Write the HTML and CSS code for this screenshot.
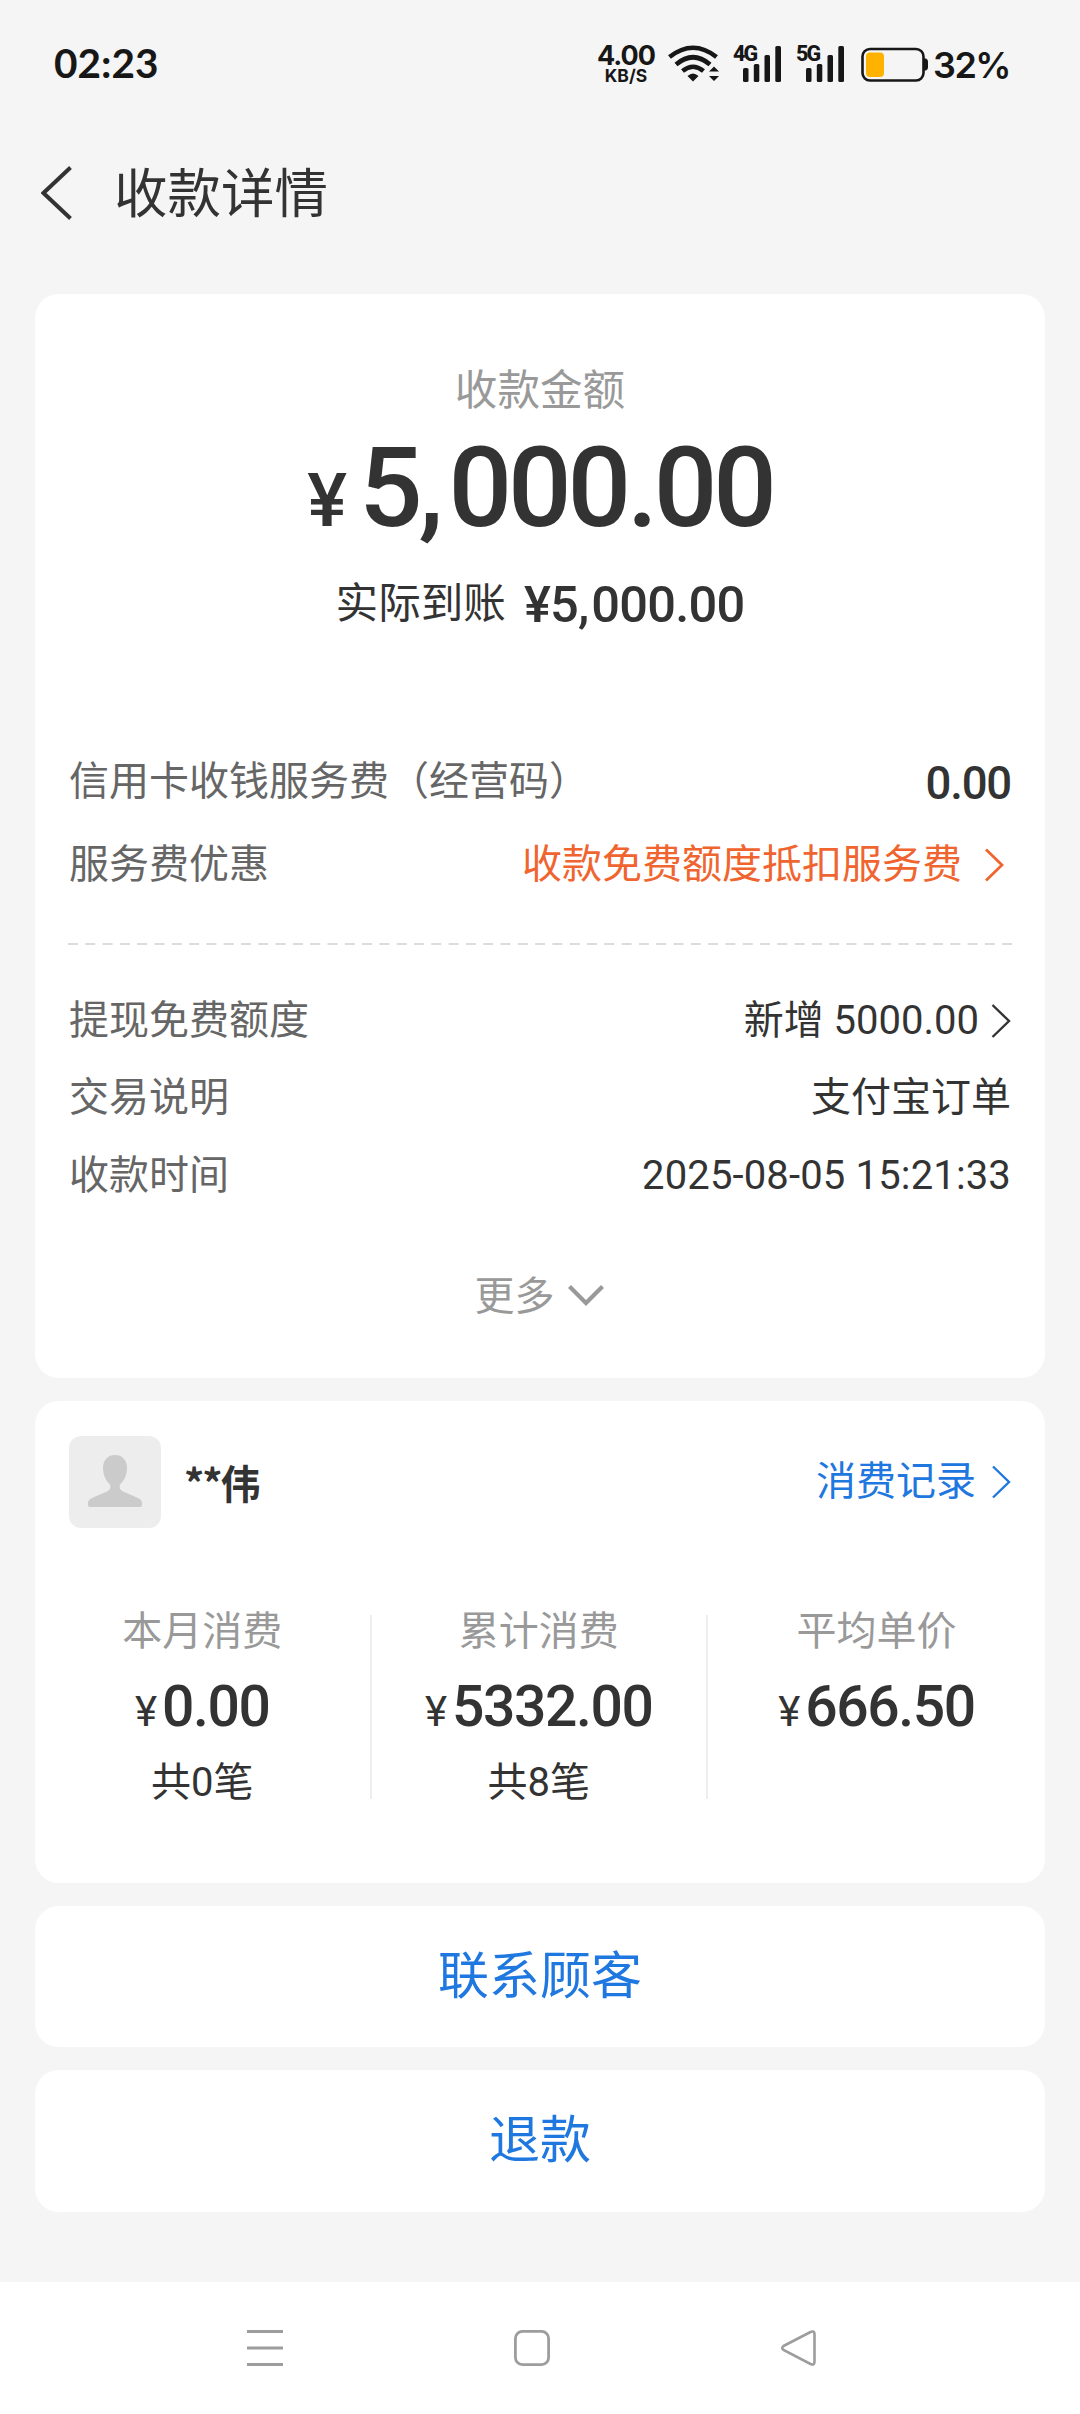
FILE: index.html
```html
<!DOCTYPE html>
<html lang="zh-CN">
<head>
<meta charset="utf-8">
<title>收款详情</title>
<link rel="stylesheet" href="styles.css">
</head>
<body>
<div class="screen">
  <header class="status">
    <span class="clock">02:23</span>
    <div class="speed"><span class="rate">4.00</span><span class="unit">KB/S</span></div>
    <svg class="wifi" width="52" height="38" viewBox="0 0 52 38">
      <g fill="none" stroke="#171717" stroke-width="4.6">
        <path d="M1.500 12Q25 -6.500 48.500 12"/>
        <path d="M8 19.500Q25 5 42 19.500"/>
        <path d="M14.500 26Q25 17.500 35.500 26"/>
      </g>
      <path fill="#171717" d="M19.500 31Q25 26 30.500 31L25 36.500ZM41 26.500L46 21.500L51 26.500ZM41 31L46 36L51 31Z"/>
    </svg>
    <div class="signal">
      <span class="net">4G</span>
      <svg width="48" height="38" viewBox="0 0 48 38" fill="#171717"><rect x="10" y="23" width="5.500" height="14" rx="1.500"/><rect x="20.800" y="19" width="5.500" height="18" rx="1.500"/><rect x="31.500" y="10" width="5.500" height="27" rx="1.500"/><rect x="42.300" y="1" width="5.700" height="36" rx="1.500"/></svg>
    </div>
    <div class="signal signal-second">
      <span class="net">5G</span>
      <svg width="48" height="38" viewBox="0 0 48 38" fill="#171717"><rect x="10" y="23" width="5.500" height="14" rx="1.500"/><rect x="20.800" y="19" width="5.500" height="18" rx="1.500"/><rect x="31.500" y="10" width="5.500" height="27" rx="1.500"/><rect x="42.300" y="1" width="5.700" height="36" rx="1.500"/></svg>
    </div>
    <svg class="battery" width="68" height="36" viewBox="0 0 68 36">
      <rect x="1.500" y="2" width="61" height="31.500" rx="7.500" fill="none" stroke="#171717" stroke-width="2.600"/>
      <rect x="5" y="5.500" width="18" height="24.500" rx="4" fill="#ffb300"/>
      <path fill="#171717" d="M63 11.500h2q2 1 2 3v6q0 2-2 3h-2z"/>
    </svg>
    <span class="percent">32%</span>
  </header>

  <div class="titlebar">
    <svg width="32" height="54" viewBox="0 0 32 54" fill="none" stroke="#333" stroke-width="4"><path d="M29.500 1.500L2.500 27L29.500 52.500"/></svg>
    <h1>收款详情</h1>
  </div>

  <main class="cards">
    <section class="card receipt">
      <div class="caption">收款金额</div>
      <div class="amount"><span class="yen">¥</span><span class="digits">5<i>,</i>000.00</span></div>
      <div class="actual"><span>实际到账</span><b>¥5<i>,</i>000.00</b></div>
      <div class="row fee"><span class="key">信用卡收钱服务费（经营码）</span><b class="fee-value">0.00</b></div>
      <div class="row discount"><span class="key">服务费优惠</span><span class="promo">收款免费额度抵扣服务费<svg class="promo-arrow" width="20" height="34" viewBox="0 0 20 34" fill="none" stroke="#f0652f" stroke-width="2.800"><path d="M2 1.500L18 17L2 32.500"/></svg></span></div>
      <svg class="divider" width="944" height="2" viewBox="0 0 944 2"><path d="M0 1H944" stroke="#dcdcdc" stroke-width="2" stroke-dasharray="10 7.300"/></svg>
      <div class="row detail"><span class="key">提现免费额度</span><span class="value">新增 5000.00<svg width="20" height="34" viewBox="0 0 20 34" fill="none" stroke="#333" stroke-width="2.400"><path d="M1.500 1L18 17L1.500 33"/></svg></span></div>
      <div class="row detail"><span class="key">交易说明</span><span class="value">支付宝订单</span></div>
      <div class="row detail"><span class="key">收款时间</span><span class="value time">2025-08-05 15:21:33</span></div>
      <div class="more">更多<svg width="36" height="24" viewBox="0 0 36 24" fill="none" stroke="#999" stroke-width="4.200"><path d="M1.500 1.500L18 18L34.500 1.500"/></svg></div>
    </section>

    <section class="card customer">
      <div class="profile">
        <svg class="avatar" width="92" height="92" viewBox="0 0 92 92"><rect width="92" height="92" rx="12" fill="#ededed"/><path fill="#cbcbcb" d="M46 19C54 19 58 25 58 32C58 39 55 45 51 48.500C50 52 51 54 54 55.500L69 62Q73 64 73 67V69Q73 71 71 71H21Q19 71 19 69V67Q19 64 23 62L38 55.500C41 54 42 52 41 48.500C37 45 34 39 34 32C34 25 38 19 46 19Z"/></svg>
        <b class="name">**伟</b>
        <span class="history">消费记录<svg width="20" height="34" viewBox="0 0 20 34" fill="none" stroke="#1f77e0" stroke-width="2.400"><path d="M2 1.500L18 17L2 32.500"/></svg></span>
      </div>
      <div class="stats">
        <div class="stat"><span class="label">本月消费</span><span class="sum"><small>¥</small>0.00</span><span class="count">共0笔</span></div>
        <div class="stat"><span class="label">累计消费</span><span class="sum"><small>¥</small>5332.00</span><span class="count">共8笔</span></div>
        <div class="stat"><span class="label">平均单价</span><span class="sum"><small>¥</small>666.50</span></div>
      </div>
    </section>

    <button class="card action">联系顾客</button>
    <button class="card action refund">退款</button>
  </main>

  <nav class="navbar">
    <svg width="36" height="36" viewBox="0 0 36 36" stroke="#9d9d9d" stroke-width="3"><path d="M0 1.500H36M0 18H36M0 34.500H36"/></svg>
    <svg width="36" height="36" viewBox="0 0 36 36" fill="none" stroke="#9d9d9d" stroke-width="2.800"><rect x="1.400" y="1.400" width="33.200" height="33.200" rx="7"/></svg>
    <svg width="36" height="36" viewBox="0 0 36 36" fill="none" stroke="#9d9d9d" stroke-width="2.600"><path d="M2.500 16L29.500 2Q33.500 .500 33.500 4V32Q33.500 35.500 29.500 34L2.500 20Q0 18 2.500 16Z"/></svg>
  </nav>
</div>
</body>
</html>
```
FILE: styles.css
```css
* { box-sizing: border-box; }
body {
  margin: 0;
  background: #f5f5f5;
  color: #333;
  font-family: Roboto, "Noto Sans CJK SC", sans-serif;
  font-size: 40px;
  line-height: 1;
}
svg { display: block; flex: none; }
i { font-style: normal; }
.screen { display: flex; flex-direction: column; width: 1080px; height: 2414px; }

.status {
  display: flex;
  align-items: flex-start;
  height: 128px;
  padding: 44px 69px 0 54px;
  color: #171717;
  font-family: Inter, sans-serif;
  font-weight: 600;
}
.clock { margin: -1px auto 0 0; width: 106px; font: 700 40.500px/40px Lato, sans-serif; }
.speed { display: flex; flex-direction: column; align-items: center; width: 62px; }
.rate { font-size: 27px; line-height: 23px; font-weight: 700; letter-spacing: -1px; }
.unit { font-size: 17.500px; line-height: 18px; font-weight: 700; }
.wifi { margin: 1px 0 0 11px; }
.signal { position: relative; margin: 1px 0 0 13px; }
.signal-second { margin-left: 15px; }
.net { position: absolute; left: 0; top: 0; font: 800 21.500px/17px Roboto, sans-serif; letter-spacing: -2px; }
.battery { margin: 3px 0 0 17px; }
.percent { width: 78px; margin-left: 4px; font-size: 36px; line-height: 42px; letter-spacing: -1.500px; }

.titlebar { display: flex; align-items: center; gap: 41px; height: 130px; padding-left: 41px; }
h1 { margin: 0; padding-top: 4px; font-size: 53.500px; font-weight: 400; line-height: 64px; }

.cards { display: flex; flex-direction: column; gap: 23px; padding: 36px 35px 0; flex: 1; }
.card { width: 1010px; border-radius: 24px; background: #fff; }
.receipt { height: 1084px; padding: 72px 34px 0; }
.caption { height: 48px; line-height: 48px; font-size: 42.600px; color: #999; text-align: center; }
.amount { display: flex; justify-content: center; align-items: baseline; gap: 19px; height: 112px; margin-top: 18px; line-height: 112px; font-weight: 500; }
.yen { font-size: 75px; letter-spacing: -7px; }
.digits { font-size: 112px; letter-spacing: -4.200px; }
.digits i { letter-spacing: 5px; }
.actual { display: flex; justify-content: center; align-items: center; gap: 18px; height: 60px; margin-top: 29px; font-size: 42.600px; line-height: 60px; }
.actual b { font-size: 50.600px; font-weight: 500; letter-spacing: -.800px; padding-top: 4px; }
.actual i { letter-spacing: 2px; }

.row { display: flex; align-items: center; justify-content: space-between; }
.key { color: #666; }
.fee { height: 60px; margin-top: 119px; }
.fee-value { font-size: 45.500px; font-weight: 500; letter-spacing: -1.200px; padding-top: 4px; }
.discount { height: 60px; margin-top: 23px; }
.promo { display: flex; align-items: center; color: #f0652f; }
.promo-arrow { margin: 0 7px 0 22px; }
.divider { margin: 48px 0 37px -1px; }
.detail { height: 77.500px; }
.value { display: flex; align-items: center; gap: 12px; }
.time { letter-spacing: .150px; }
.more { display: flex; justify-content: center; align-items: center; gap: 13px; height: 60px; margin: 52px 2px 0 0; color: #999; }

.customer { height: 482px; padding: 35px 0 0; }
.profile { display: flex; align-items: center; padding: 0 34px; }
.name { margin-left: 23px; font-family: "Noto Sans CJK SC", sans-serif; font-weight: 700; letter-spacing: -2px; }
.history { display: flex; align-items: center; gap: 15px; margin-left: auto; color: #1f77e0; }
.stats { display: flex; margin-top: 87px; height: 184px; }
.stat { display: flex; flex-direction: column; align-items: center; width: 336.500px; border-right: 2px solid #eee; }
.stat:last-child { border-right: 0; width: 337px; }
.label { line-height: 40px; margin-top: -3px; color: #999; }
.sum { margin-top: 25px; font-size: 57px; line-height: 60px; font-weight: 500; letter-spacing: -1.400px; }
.sum small { font-size: 42px; font-weight: 400; margin-right: 7px; letter-spacing: -2px; }
.count { margin-top: 21px; line-height: 40px; }

.action { display: block; height: 141px; padding: 0; border: 0; font: 51px/142px Roboto, "Noto Sans CJK SC", sans-serif; color: #1f77e0; }
.refund { height: 142px; }

.navbar { display: flex; justify-content: center; gap: 231px; height: 132px; margin-top: auto; padding: 48px 17px 0 0; background: #fff; }
```
